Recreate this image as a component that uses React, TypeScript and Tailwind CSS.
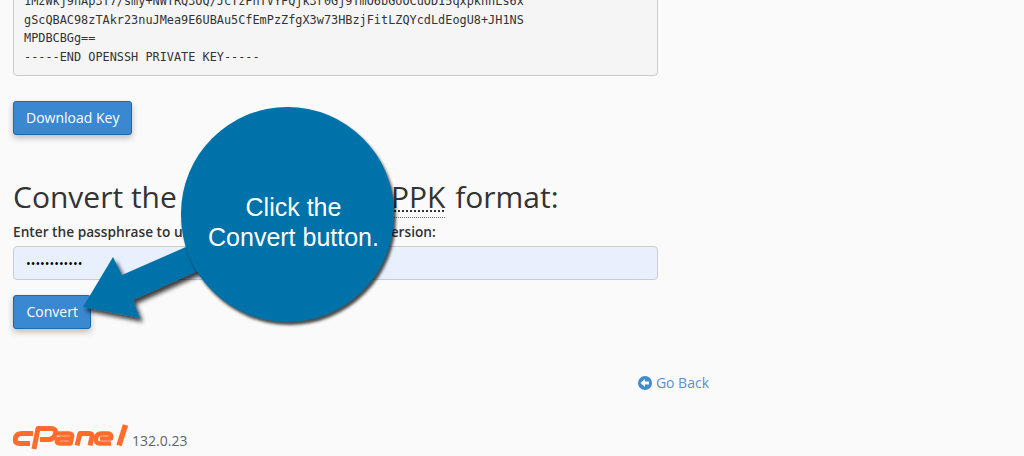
const keyLines = [
  '1MzWkj9nAp3T7/smy+NWTRQ3OQ/JcTzFnTVYFQjk3r0Gj9TmO6bGoOCuOD15qxpknnLs6x',
  'gScQBAC98zTAkr23nuJMea9E6UBAu5CfEmPzZfgX3w73HBzjFitLZQYcdLdEogU8+JH1NS',
  'MPDBCBGg==',
  '-----END OPENSSH PRIVATE KEY-----',
]

const CpanelLogo = () => (
  <svg width="118" height="28" viewBox="0 0 118 28" fill="none" stroke="#ff6c2c" strokeWidth="4.5" strokeLinejoin="round">
    <path d="M20 10.500 H9 Q3.500 10.500 2.500 15 Q1 20.500 7 20.500 H17" strokeWidth="5" />
    <path d="M21 26 L25 5.500 H38 Q43.500 5.500 42.500 11 Q41 16.500 35 16.500 H27" strokeWidth="5" />
    <path d="M45 10.500 H56 Q60 10.500 59 14 L57.500 20.500 H47 Q43 20.500 44 17.500 Q45 15.500 48 15.500 H58" />
    <path d="M64 22.500 L67 10.500 H76 Q80 10.500 79 14 L77 22.500" strokeWidth="5" />
    <path d="M87 15.500 H98 Q99 10.500 95 10.500 H88 Q84 10.500 83 15 Q82 20.500 87 20.500 H98" />
    <path d="M106 22.500 L112.500 2" strokeWidth="5.500" />
  </svg>
)

const App = () => {
  return (
    <div className="relative h-[456px] w-[1024px] overflow-hidden bg-[#fafafa] font-['Open_Sans',sans-serif] text-[#333]">
      <div className="-mt-[38px] ml-[13px] w-[645px]">
        <pre className="h-[114px] rounded border border-[#ccc] bg-[#f5f5f5] px-[10px] pt-[10.5px] font-['DejaVu_Sans_Mono',monospace] text-[11.86px] leading-[18.5px] text-[#333]">
          <div>&nbsp;</div>
          {keyLines.map((line) => (
            <div key={line}>{line}</div>
          ))}
        </pre>

        <button className="mt-[25px] block h-[34px] rounded-[3px] border border-[#1b6aab] bg-[#3a88d1] px-[12px] pb-[2px] text-[14px] text-white shadow-[0_3px_6px_rgba(0,0,0,0.25)]">
          Download Key
        </button>

        <h2 className="mt-[44px] whitespace-nowrap text-[30px] leading-[36px]">
          Convert the id-1 key to the{' '}
          <span className="mr-[2px] border-b border-dotted border-[#777] underline decoration-dotted decoration-2 underline-offset-[2px]">PPK</span> format:
        </h2>
        <label className="mt-[7px] block whitespace-nowrap text-[13.7px] font-semibold leading-[20px]">
          Enter the passphrase to unlock your key for the PPK conversion:
        </label>
        <input
          type="password"
          readOnly
          value="••••••••••••"
          className="mt-[4px] block h-[34px] w-full rounded border border-[#ccc] bg-[#e8f0fe] px-[12px] text-[12.5px] text-black"
        />
        <button className="mt-[15px] block h-[34px] rounded-[3px] border border-[#1b6aab] bg-[#3a88d1] px-[12.5px] pb-[2px] text-[14px] text-white shadow-[0_3px_6px_rgba(0,0,0,0.25)]">
          Convert
        </button>
      </div>

      <div className="mt-[43px] flex w-[709px] items-center justify-end gap-[4px] text-[14px] text-[#5a8fd0]">
        <svg width="14" height="14" viewBox="0 0 14 14">
          <circle cx="7" cy="7" r="7" fill="#428bca" />
          <path d="M2.500 7 L7 3 V5.500 H11 V8.500 H7 V11 Z" fill="#fafafa" />
        </svg>
        <span>Go Back</span>
      </div>

      <div className="ml-[13px] mt-[30px] flex items-end gap-[1px]">
        <CpanelLogo />
        <span className="text-[14px] leading-[20px] text-[#5a6672]">132.0.23</span>
      </div>

      {/* callout overlay */}
      <svg className="absolute left-0 top-0" width="1024" height="456" viewBox="0 0 1024 456">
        <defs>
          <filter id="arrowShadow" x="-20%" y="-20%" width="140%" height="140%">
            <feDropShadow dx="3" dy="4" stdDeviation="2" floodColor="#000" floodOpacity="0.75" />
          </filter>
        </defs>
        <path d="M113 257 L122 275 L195 243 L200 270 L133 300 L140 318 L83 307 Z" fill="#0072aa" filter="url(#arrowShadow)" />
      </svg>
      <div className="absolute left-[181px] top-[107px] flex h-[215px] w-[213px] flex-col items-center justify-center rounded-full bg-[#0072aa] pl-[12px] pt-[15px] font-['Liberation_Sans',sans-serif] text-[25px] leading-[30px] text-white shadow-[2px_3px_3px_rgba(0,0,0,0.7)]">
        <span>Click the</span>
        <span>Convert button.</span>
      </div>
    </div>
  )
}

export default App
